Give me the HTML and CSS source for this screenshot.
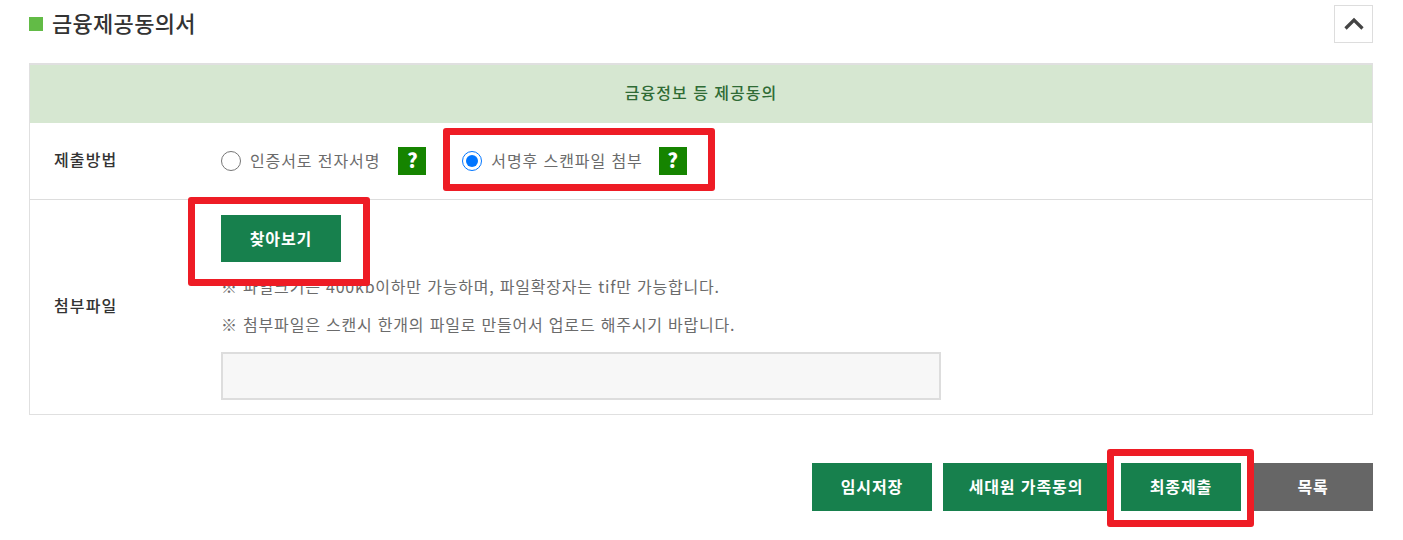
FILE: index.html
```html
<!DOCTYPE html>
<html lang="ko">
<head>
<meta charset="utf-8">
<title>금융제공동의서</title>
<link rel="stylesheet" href="styles.css">
</head>
<body>
<main class="page">
  <header class="title-bar">
    <h2 class="title"><span>금융제공동의서</span></h2>
    <button class="collapse" type="button" aria-label="접기">
      <svg width="22" height="14" viewBox="0 0 22 14"><path d="M2.500 11.500 11 3l8.500 8.500" fill="none" stroke="#444" stroke-width="3.2"/></svg>
    </button>
  </header>
  <section class="panel">
    <div class="panel-head"><span>금융정보 등 제공동의</span></div>
    <div class="row row-method">
      <div class="row-label"><span>제출방법</span></div>
      <div class="row-body methods">
        <label class="method method-a"><input type="radio" name="m"><span>인증서로 전자서명</span></label>
        <span class="help">?</span>
        <label class="method method-b"><input type="radio" name="m" checked><span>서명후 스캔파일 첨부</span></label>
        <span class="help">?</span>
      </div>
    </div>
    <div class="row row-file">
      <div class="row-label"><span>첨부파일</span></div>
      <div class="row-body file-body">
        <button class="btn browse" type="button">찾아보기</button>
        <p class="note note-one">※ 파일크기는 400kb이하만 가능하며, 파일확장자는 tif만 가능합니다.</p>
        <p class="note note-two">※ 첨부파일은 스캔시 한개의 파일로 만들어서 업로드 해주시기 바랍니다.</p>
        <div class="file-box"></div>
      </div>
    </div>
  </section>
  <footer class="actions">
    <button class="btn btn-first" type="button">임시저장</button>
    <button class="btn btn-wide" type="button">세대원 가족동의</button>
    <button class="btn" type="button">최종제출</button>
    <button class="btn btn-gray" type="button">목록</button>
  </footer>
  <div class="mark mark-radio"></div>
  <div class="mark mark-browse"></div>
  <div class="mark mark-submit"></div>
</main>
</body>
</html>
```
FILE: styles.css
```css
* { box-sizing: border-box; }
html, body { margin: 0; padding: 0; background: #fff; }
body {
  font-family: "Noto Sans CJK KR", "Noto Sans", sans-serif;
  color: #6b6b6b;
  font-size: 16px;
}
.page {
  position: relative;
  width: 1403px;
  height: 540px;
  padding: 0 30px 0 29px;
  overflow: hidden;
}
.title-bar {
  display: flex;
  align-items: flex-start;
  justify-content: space-between;
  height: 63px;
  padding-top: 5px;
}
.title {
  display: flex;
  align-items: center;
  gap: 9px;
  margin: 0;
  height: 38px;
  font-size: 22px;
  line-height: 34px;
  font-weight: 500;
  letter-spacing: 0.3px;
  color: #333;
}
.title span { margin-bottom: 4px; }
.title::before {
  content: "";
  width: 14px;
  height: 14px;
  background: #62bb46;
}
.collapse {
  display: flex;
  align-items: center;
  justify-content: center;
  width: 39px;
  height: 38px;
  padding: 0;
  background: #fff;
  border: 1px solid #ddd;
}
.panel {
  border: 1px solid #e0e0e0;
  border-top-width: 2px;
}
.panel-head {
  height: 58px;
  display: flex;
  align-items: center;
  justify-content: center;
  background: #d6e7d1;
  color: #2f6b35;
  font-size: 16px;
  letter-spacing: 1px;
  font-weight: 500;
  padding-bottom: 4px;
}
.row { display: flex; }
.row-method { height: 77px; border-bottom: 1px solid #ddd; }
.row-file { height: 214px; }
.row-label {
  display: flex;
  align-items: center;
  width: 191px;
  padding-left: 24px;
  padding-bottom: 4px;
  font-size: 16px;
  letter-spacing: 1.1px;
  font-weight: 500;
  color: #333;
}
.row-body { flex: 1; }
.methods { display: flex; align-items: center; }
.method {
  display: flex;
  align-items: center;
  gap: 9px;
  letter-spacing: 0.9px;
}
.method span { padding-bottom: 3px; }
.method input { width: 20px; height: 20px; margin: 0; }
.help {
  display: flex;
  align-items: center;
  justify-content: center;
  width: 28px;
  height: 28px;
  margin-left: 16px;
  background: #158400;
  color: #fff;
  font-size: 20px;
  font-weight: 900;
  line-height: 1;
  padding-bottom: 2px;
}
.method-a + .help { margin-left: 18px; }
.method-b { margin-left: 36px; }
.file-body { padding-top: 15px; }
.btn {
  display: block;
  width: 120px;
  height: 48px;
  padding: 0 0 2px;
  border: 0;
  background: #17804d;
  color: #fff;
  font-family: inherit;
  font-size: 16px;
  letter-spacing: 0.9px;
  font-weight: 700;
}
.browse { height: 47px; }
.note { margin: 0; line-height: 22px; letter-spacing: 0.8px; }
.note-one { margin-top: 13px; }
.note-two { margin-top: 16px; }
.file-box {
  width: 720px;
  height: 48px;
  margin-top: 17px;
  background: #f7f7f7;
  border: 2px solid #ddd;
}
.actions {
  display: flex;
  justify-content: flex-end;
  gap: 12px;
  margin-top: 48px;
}
.btn-first { margin-right: -1px; }
.btn-wide { width: 166px; }
.btn-gray { background: #666; }
.mark {
  position: absolute;
  border: 7px solid #ee1c25;
  border-radius: 3px;
}
.mark-radio { left: 443px; top: 128px; width: 272px; height: 63px; }
.mark-browse { left: 188px; top: 197px; width: 182px; height: 89px; }
.mark-submit { left: 1107px; top: 449px; width: 147px; height: 78px; }
```
